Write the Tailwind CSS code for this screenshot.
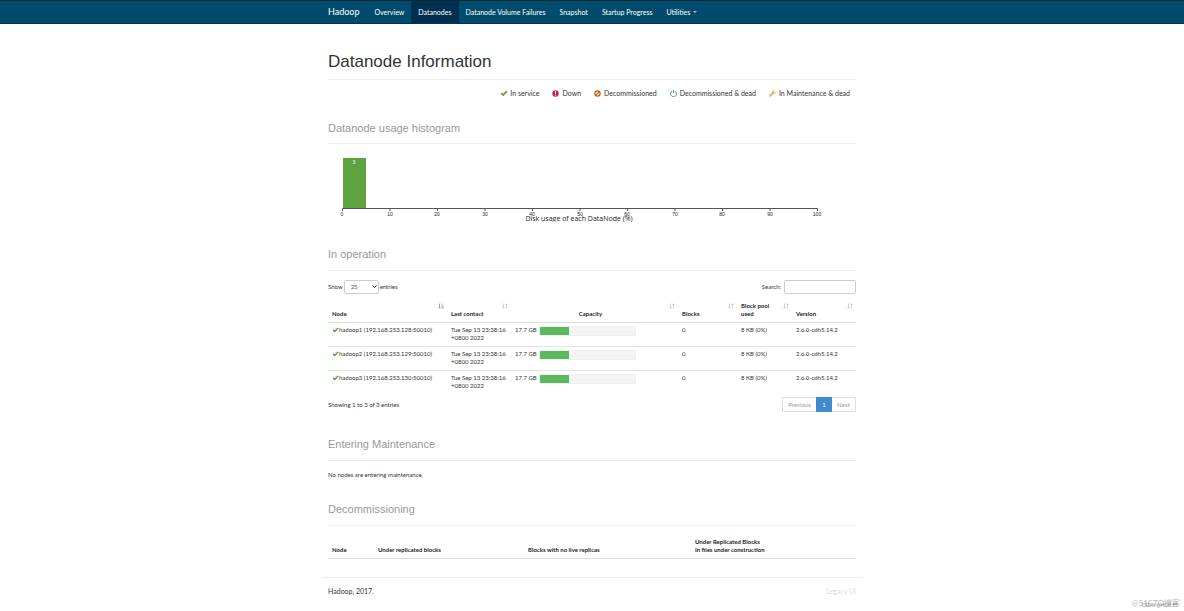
<!DOCTYPE html>
<html lang="en">
<head>
<meta charset="utf-8">
<title>Datanode Information</title>
<script src="https://cdn.jsdelivr.net/npm/@tailwindcss/browser@4"></script>
</head>
<body class="relative min-h-screen bg-white font-['Lato','Noto_Sans_CJK_SC',sans-serif] text-[6px] leading-[8px] text-[#333]">
<svg class="hidden" aria-hidden="true">
  <symbol id="check" viewBox="0 0 14 12"><path d="M1 6.5 3.2 4.3 5.4 6.6 11.4 .8 13.4 2.8 5.5 10.8Z"/></symbol>
  <symbol id="sort" viewBox="0 0 12 12"><path d="M3 1v9M1 8l2 2.5L5 8M9 11V2M7 4l2-2.5L11 4" fill="none" stroke="currentColor" stroke-width="1.3"/></symbol>
  <symbol id="sorted" viewBox="0 0 12 12"><path d="M3 1v9M.8 8 3 10.5 5.2 8M7 2h2M7 4.7h3M7 7.4h4M7 10h5" fill="none" stroke="currentColor" stroke-width="1.4"/></symbol>
</svg>

<header class="h-6 border-y border-t-[#04283c] border-b-[#033450] bg-[#014c6d]">
  <nav class="mx-auto flex h-full max-w-[542px] items-center whitespace-nowrap px-[7px] text-[7px] text-white">
    <a href="#" class="mr-2 text-[9px]">Hadoop</a>
    <a href="#" class="flex h-full items-center px-[7px]">Overview</a>
    <a href="#" class="flex h-full items-center bg-[#012f4f] px-[7px]">Datanodes</a>
    <a href="#" class="flex h-full items-center px-[7px]">Datanode Volume Failures</a>
    <a href="#" class="flex h-full items-center px-[7px]">Snapshot</a>
    <a href="#" class="flex h-full items-center px-[7px]">Startup Progress</a>
    <a href="#" class="flex h-full items-center gap-[3px] px-[7px]">Utilities <svg class="h-[2px] w-1 fill-[#a9c0cc]" viewBox="0 0 4 2"><path d="M0 0h4L2 2Z"/></svg></a>
  </nav>
</header>

<main class="mx-auto max-w-[542px] px-[7px]">
  <h1 class="mt-7 border-b border-[#eee] pb-[7px] font-['Liberation_Sans',sans-serif] text-[17px] leading-5 text-[#333]">Datanode Information</h1>

  <ul class="mt-[5px] flex h-4 items-center justify-end gap-[13px] whitespace-nowrap pr-[6px] text-[7px] text-[#333]">
    <li class="flex items-center gap-[2px]"><svg class="h-[7px] w-2 fill-[#5fa341]"><use href="#check"/></svg>In service</li>
    <li class="flex items-center gap-[3px]"><svg class="size-[7px]" viewBox="0 0 12 12"><circle cx="6" cy="6" r="5.500" fill="#c7254e"/><path d="M5 2h2l-.3 5H5.300Z M5 8.200h2V10H5Z" fill="#fff"/></svg>Down</li>
    <li class="flex items-center gap-[3px]"><svg class="size-[7px]" viewBox="0 0 12 12" fill="none" stroke="#bc5f04" stroke-width="2"><circle cx="6" cy="6" r="4.500"/><path d="m2.800 9.200 6.400-6.400"/></svg>Decommissioned</li>
    <li class="flex items-center gap-[3px]"><svg class="size-[7px]" viewBox="0 0 12 12" fill="none" stroke="#4a87c0" stroke-width="1.700"><path d="M3.500 2A5 5 0 1 0 8.500 2M6 0v5.500"/></svg>Decommissioned &amp; dead</li>
    <li class="flex items-center gap-[3px]"><svg class="size-[7px] fill-[#f0932b]" viewBox="0 0 12 12"><path d="M.4 10 5.600 4.900C5.200 2.500 7 .4 9.600.6L7.700 2.700l.4 1.500 1.500.4L11.600 2.600C12 5 9.800 6.900 7.400 6.400L2.100 11.600C1 12.200-.2 11 .4 10Z"/></svg>In Maintenance &amp; dead</li>
  </ul>

  <h2 class="mt-5 border-b border-[#eee] pb-2 font-['Liberation_Sans',sans-serif] text-[11px] leading-[14px] text-[#999]">Datanode usage histogram</h2>
  <svg class="block h-[78px] w-full overflow-hidden font-['Liberation_Sans',sans-serif] text-[5px]" viewBox="0 0 527 78" preserveAspectRatio="xMinYMin meet" text-anchor="middle" fill="#222">
    <rect x="15" y="14" width="23" height="51" fill="#5fa341"/>
    <text x="26" y="20" fill="#fff">3</text>
    <path d="M14.500 67v-2.500H489.500V67M62 65v2M109.500 65v2M157 65v2M204.500 65v2M252 65v2M299.500 65v2M347 65v2M394.500 65v2M442 65v2" fill="none" stroke="#555" stroke-width="1"/>
    <text x="14" y="72">0</text><text x="62" y="72">10</text><text x="109" y="72">20</text><text x="157" y="72">30</text><text x="204" y="72">40</text><text x="252" y="72">50</text><text x="299" y="72">60</text><text x="347" y="72">70</text><text x="394" y="72">80</text><text x="442" y="72">90</text><text x="489" y="72">100</text>
    <text x="251" y="77" class="font-['Open_Sans',sans-serif] text-[7px]">Disk usage of each DataNode (%)</text>
  </svg>

  <h2 class="mt-[25px] border-b border-[#eee] pb-[9px] font-['Liberation_Sans',sans-serif] text-[11px] leading-[14px] text-[#999]">In operation</h2>
  <div class="mt-2 flex h-[15px] items-center justify-between">
    <label class="flex items-center gap-px">Show
      <span class="relative flex items-center">
        <select class="h-[14px] w-[35px] appearance-none rounded-[2px] border border-[#ccc] bg-white px-[6px] text-[6px] leading-[8px] text-[#555]"><option>10</option><option selected>25</option><option>50</option></select>
        <svg class="pointer-events-none absolute right-[2px] h-[3px] w-[5px]" viewBox="0 0 10 6" fill="none" stroke="#222" stroke-width="2"><path d="m1 1 4 4 4-4"/></svg>
      </span>
      entries</label>
    <label class="flex items-center gap-[3px]">Search:<input type="search" class="h-[14px] w-[72px] rounded-[2px] border border-[#ccc] px-1"></label>
  </div>

  <table class="mt-[5px] w-full table-fixed border-collapse whitespace-nowrap text-left">
    <colgroup><col class="w-[119px]"><col class="w-[64px]"><col class="w-[167px]"><col class="w-[59px]"><col class="w-[55px]"><col></colgroup>
    <thead class="text-[#222]">
      <tr class="border-b border-[#ddd] align-bottom">
        <th class="relative px-1 pt-[3px] pb-1">Node<svg class="absolute top-1 right-[3px] size-[6px] text-[#888]"><use href="#sorted"/></svg></th>
        <th class="relative px-1 pt-[3px] pb-1">Last contact<svg class="absolute top-1 right-[3px] size-[6px] text-[#bbb]"><use href="#sort"/></svg></th>
        <th class="relative pt-[3px] pr-3 pb-1 pl-1 text-center">Capacity<svg class="absolute top-1 right-[3px] size-[6px] text-[#bbb]"><use href="#sort"/></svg></th>
        <th class="relative px-1 pt-[3px] pb-1">Blocks<svg class="absolute top-1 right-[3px] size-[6px] text-[#bbb]"><use href="#sort"/></svg></th>
        <th class="relative px-1 pt-[3px] pb-1">Block pool<br>used<svg class="absolute top-1 right-[3px] size-[6px] text-[#bbb]"><use href="#sort"/></svg></th>
        <th class="relative px-1 pt-[3px] pb-1">Version<svg class="absolute top-1 right-[3px] size-[6px] text-[#bbb]"><use href="#sort"/></svg></th>
      </tr>
    </thead>
    <tbody class="align-top">
      <tr class="border-b border-[#e4e4e4]">
        <td class="px-1 pt-[3px] pb-1"><span class="flex items-center"><svg class="h-[6px] w-[7px] fill-[#5fa341]"><use href="#check"/></svg>hadoop1 (192.168.253.128:50010)</span></td>
        <td class="px-1 pt-[3px] pb-1">Tue Sep 13 23:38:16<br>+0800 2022</td>
        <td class="px-1 pt-[3px] pb-1"><div class="flex"><span class="w-6">17.7 GB</span><div class="h-[10px] w-[97px] overflow-hidden rounded-[2px] border border-[#eee] bg-[#f5f5f5]"><div class="h-full bg-[#5cb85c]" style="width:31%"></div></div></div></td>
        <td class="px-1 pt-[3px] pb-1">0</td><td class="px-1 pt-[3px] pb-1">8 KB (0%)</td><td class="px-1 pt-[3px] pb-1">2.6.0-cdh5.14.2</td>
      </tr>
      <tr class="border-b border-[#e4e4e4]">
        <td class="px-1 pt-[3px] pb-1"><span class="flex items-center"><svg class="h-[6px] w-[7px] fill-[#5fa341]"><use href="#check"/></svg>hadoop2 (192.168.253.129:50010)</span></td>
        <td class="px-1 pt-[3px] pb-1">Tue Sep 13 23:38:16<br>+0800 2022</td>
        <td class="px-1 pt-[3px] pb-1"><div class="flex"><span class="w-6">17.7 GB</span><div class="h-[10px] w-[97px] overflow-hidden rounded-[2px] border border-[#eee] bg-[#f5f5f5]"><div class="h-full bg-[#5cb85c]" style="width:31%"></div></div></div></td>
        <td class="px-1 pt-[3px] pb-1">0</td><td class="px-1 pt-[3px] pb-1">8 KB (0%)</td><td class="px-1 pt-[3px] pb-1">2.6.0-cdh5.14.2</td>
      </tr>
      <tr>
        <td class="px-1 pt-[3px] pb-1"><span class="flex items-center"><svg class="h-[6px] w-[7px] fill-[#5fa341]"><use href="#check"/></svg>hadoop3 (192.168.253.130:50010)</span></td>
        <td class="px-1 pt-[3px] pb-1">Tue Sep 13 23:38:16<br>+0800 2022</td>
        <td class="px-1 pt-[3px] pb-1"><div class="flex"><span class="w-6">17.7 GB</span><div class="h-[10px] w-[97px] overflow-hidden rounded-[2px] border border-[#eee] bg-[#f5f5f5]"><div class="h-full bg-[#5cb85c]" style="width:31%"></div></div></div></td>
        <td class="px-1 pt-[3px] pb-1">0</td><td class="px-1 pt-[3px] pb-1">8 KB (0%)</td><td class="px-1 pt-[3px] pb-1">2.6.0-cdh5.14.2</td>
      </tr>
    </tbody>
  </table>

  <div class="mt-[3px] flex items-center justify-between">
    <p>Showing 1 to 3 of 3 entries</p>
    <nav class="flex h-[15px] text-[#999]" aria-label="Pages">
      <button class="w-[34px] rounded-l-[2px] border border-r-0 border-[#ddd]">Previous</button>
      <button class="w-[16px] border border-[#428bca] bg-[#428bca] text-white">1</button>
      <button class="w-6 rounded-r-[2px] border border-l-0 border-[#ddd]">Next</button>
    </nav>
  </div>

  <h2 class="mt-[25px] border-b border-[#eee] pb-[9px] font-['Liberation_Sans',sans-serif] text-[11px] leading-[14px] text-[#999]">Entering Maintenance</h2>
  <p class="mt-[10px]">No nodes are entering maintenance.</p>

  <h2 class="mt-[23px] border-b border-[#eee] pb-[9px] font-['Liberation_Sans',sans-serif] text-[11px] leading-[14px] text-[#999]">Decommissioning</h2>
  <table class="mt-[9px] w-full table-fixed border-collapse whitespace-nowrap text-left text-[#222]">
    <colgroup><col class="w-[46px]"><col class="w-[150px]"><col class="w-[167px]"><col></colgroup>
    <thead><tr class="border-b border-[#ddd] align-bottom">
      <th class="px-1 pt-[3px] pb-1">Node</th>
      <th class="px-1 pt-[3px] pb-1">Under replicated blocks</th>
      <th class="px-1 pt-[3px] pb-1">Blocks with no live replicas</th>
      <th class="px-1 pt-[3px] pb-1">Under Replicated Blocks<br>In files under construction</th>
    </tr></thead>
  </table>
</main>

<footer class="mx-auto mt-[18px] flex max-w-[542px] justify-between border-t border-[#eee] px-[7px] pt-[9px] text-[7px]">
  <p>Hadoop, 2017.</p>
  <a href="#" class="text-[#ddd]">Legacy UI</a>
</footer>

<p class="absolute right-1 bottom-1 text-[8px] text-[#bbb]">@51CTO博客</p>
<p class="absolute right-[7px] bottom-[2px] text-[5px] text-[#888]">CSDN @HGK.Ff</p>
</body>
</html>
